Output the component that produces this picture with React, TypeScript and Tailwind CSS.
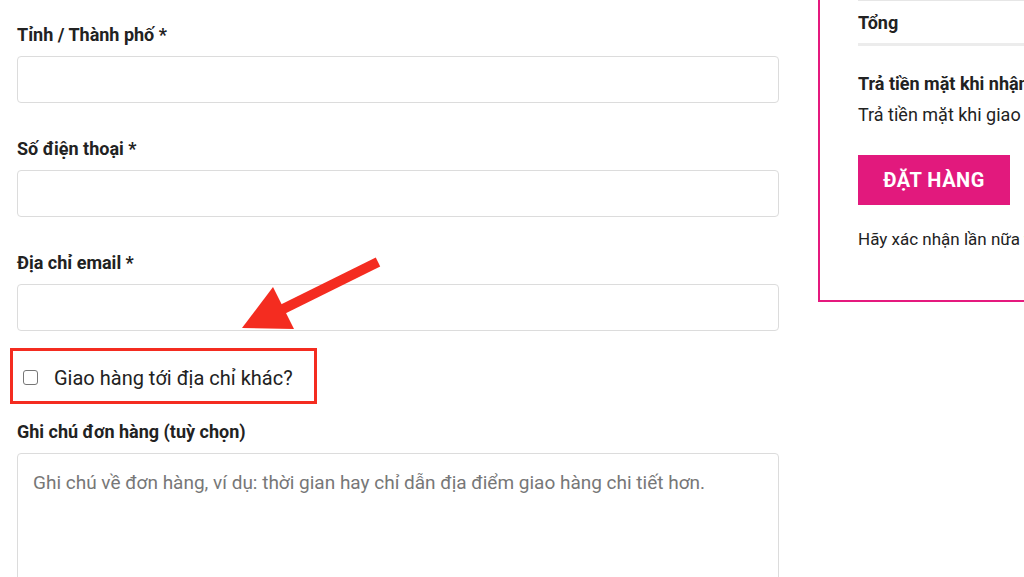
const truong = [
  { nhan: "Tỉnh / Thành phố *" },
  { nhan: "Số điện thoại *" },
  { nhan: "Địa chỉ email *" },
];

function MuiTen() {
  return (
    <svg
      className="pointer-events-none absolute left-0 top-0"
      width="1024"
      height="577"
      viewBox="0 0 1024 577"
    >
      <line x1="378" y1="262" x2="275" y2="313" stroke="#f42c20" strokeWidth="10" />
      <polygon points="242,328 273,287 294,329" fill="#f42c20" />
    </svg>
  );
}

export default function App() {
  return (
    <div
      className="relative flex h-[577px] w-[1024px] overflow-hidden bg-white text-[#222]"
      style={{ fontFamily: "Roboto, 'Noto Sans', sans-serif" }}
    >
      <div className="ml-[17px] w-[762px] shrink-0">
        {truong.map((t, i) => (
          <div key={t.nhan} className={i === 0 ? "pt-[23px]" : "pt-[34px]"}>
            <label className="block h-[24px] text-[18px] font-bold leading-[24px]">
              {t.nhan}
            </label>
            <div className="mt-[9px] h-[47px] rounded-[4px] border border-[#dcdcdc] bg-white" />
          </div>
        ))}

        <div className="-ml-[7px] mt-[17px] flex h-[56px] w-[307px] items-center border-[3px] border-[#f42c20] pl-[10px] pt-[3px]">
          <span className="h-[15px] w-[15px] rounded-[3px] border border-[#777] bg-white" />
          <span className="ml-[16px] text-[20px] leading-none text-[#222]">
            Giao hàng tới địa chỉ khác?
          </span>
        </div>

        <label className="mt-[16px] block h-[24px] text-[18px] font-bold leading-[24px]">
          Ghi chú đơn hàng (tuỳ chọn)
        </label>
        <div className="mt-[9px] h-[140px] rounded-[4px] border border-[#dcdcdc] px-[15px] pt-[17px]">
          <span className="whitespace-nowrap text-[19px] leading-[24px] text-[#777]">
            Ghi chú về đơn hàng, ví dụ: thời gian hay chỉ dẫn địa điểm giao hàng chi tiết hơn.
          </span>
        </div>
      </div>

      <div className="ml-[39px] h-[302px] w-[420px] shrink-0 border-x-2 border-b-2 border-[#e5197e] pl-[38px]">
        <div className="whitespace-nowrap border-t border-[#e6e6e6]">
          <div className="flex h-[45px] items-center border-b-[3px] border-[#ececec] text-[18px] font-bold">
            Tổng
          </div>
          <div className="mt-[26px] text-[18px] font-bold leading-[24px]">
            Trả tiền mặt khi nhận hàng
          </div>
          <div className="mt-[7px] text-[18px] leading-[24px]">
            Trả tiền mặt khi giao hàng.
          </div>
          <button className="mt-[28px] flex h-[50px] w-[152px] items-center justify-center bg-[#e2197d] text-[20px] font-bold tracking-[0.5px] text-white">
            ĐẶT HÀNG
          </button>
          <div className="mt-[23px] text-[17px] leading-[22px]">
            Hãy xác nhận lần nữa thông tin đặt hàng của bạn.
          </div>
        </div>
      </div>

      <MuiTen />
    </div>
  );
}
